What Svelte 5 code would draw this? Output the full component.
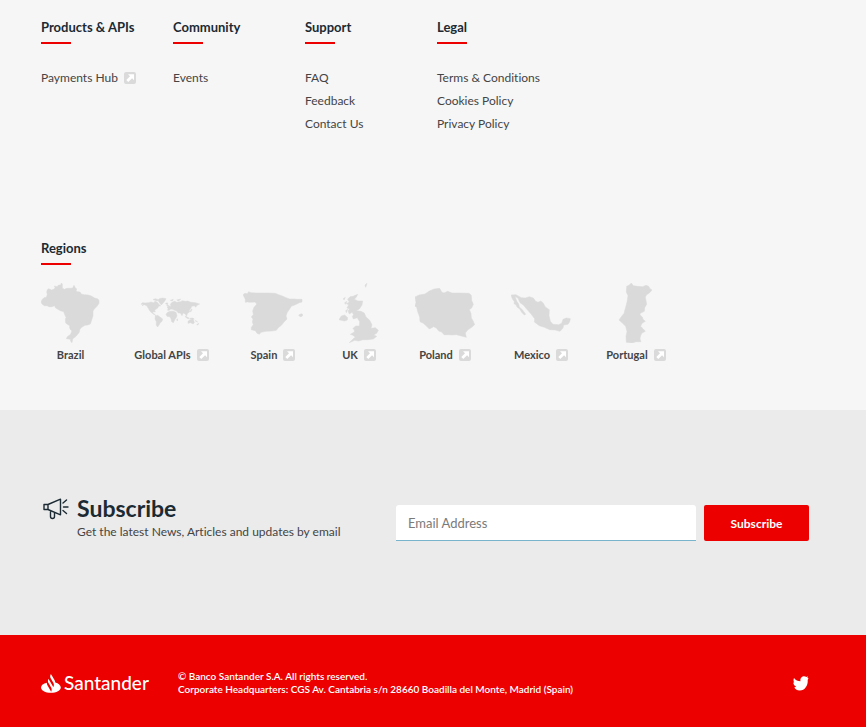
<script>
  const columns = [
    { title: 'Products & APIs', links: [{ text: 'Payments Hub', external: true }] },
    { title: 'Community', links: [{ text: 'Events' }] },
    { title: 'Support', links: [{ text: 'FAQ' }, { text: 'Feedback' }, { text: 'Contact Us' }] },
    { title: 'Legal', links: [{ text: 'Terms & Conditions' }, { text: 'Cookies Policy' }, { text: 'Privacy Policy' }] },
  ];

  const regions = [
    {
      name: 'Brazil', width: 59, box: '33 39 177 180', external: false,
      d: 'M52 59L56 56L65 60L73 57L75 52L73 48L81 50L86 45L92 45L94 39L97 42L97 54L103 58L111 55L122 55L128 54L132 46L136 53L140 57L138 63L143 65L150 66L154 72L163 74L175 75L184 78L194 84L204 87L207 92L207 100L201 109L193 117L189 123L189 137L184 154L181 162L173 165L165 166L155 172L150 178L147 188L138 199L128 207L126 218L122 214L121 208L109 206L112 200L122 193L124 187L126 182L122 180L119 174L119 167L112 163L107 159L106 148L108 142L105 136L101 125L91 122L82 117L76 113L74 107L66 110L57 110L51 107L43 107L36 102L33 96L36 89L42 83L49 82L52 73L50 67Z',
    },
    {
      name: 'Global APIs', width: 71, box: '318 39 213 180', external: true,
      d: 'M333 103L337 98L346 99L356 98L363 96L371 98L375 94L382 97L386 102L392 108L386 108L384 113L379 117L374 121L376 126L371 125L367 129L373 132L378 137L373 134L366 129L360 124L355 115L350 107L343 104L336 107L341 103ZM369 89L376 86L385 89L382 93L375 91ZM384 91L388 86L398 84L408 86L405 92L400 98L394 105L389 99ZM408 99L414 99L412 103L407 102ZM376 138L383 136L390 141L398 147L396 154L391 158L387 165L383 171L379 166L379 155L375 147ZM413 121L414 115L411 111L417 107L423 110L421 103L426 97L434 94L440 97L451 95L457 92L467 94L473 93L483 97L496 98L509 102L501 106L497 112L493 107L485 109L482 116L478 121L478 126L472 131L470 138L465 131L459 129L456 137L451 129L445 129L440 123L434 121L428 118L422 117L418 121ZM413 127L421 124L430 124L438 127L441 137L438 144L434 150L430 158L425 155L423 146L419 140L411 139L408 133ZM440 149L443 146L442 153ZM466 138L473 142L478 145L474 146L467 142ZM479 145L488 144L493 147L488 149ZM474 154L480 149L486 148L491 151L493 158L489 162L482 158L474 160ZM410 107L413 103L416 108ZM440 90L452 87L446 93ZM479 126L483 119L486 117L484 124ZM495 152L499 153L503 156ZM500 164L506 160L504 165ZM421 91L430 88L427 93Z',
    },
    {
      name: 'Spain', width: 60, box: '54 39 180 180', external: true,
      d: 'M54 74L60 70L67 71L71 65L78 68L93 69L111 69L132 69L151 70L161 74L172 78L183 83L194 87L207 87L220 88L231 88L231 96L223 98L211 104L199 109L194 117L187 127L183 138L186 147L177 156L170 165L160 173L154 181L141 183L123 184L108 187L103 193L96 190L91 182L79 179L79 172L85 164L82 156L84 147L79 141L85 133L83 123L87 112L95 103L91 96L75 97L67 96L61 97L61 88ZM221 135L229 131L234 134L231 139L225 140Z',
    },
    {
      name: 'UK', width: 40, box: '342 39 120 180', external: true,
      d: 'M375 80L384 79L398 73L394 81L388 88L399 93L413 93L411 105L403 117L394 122L408 124L418 129L423 141L434 151L441 164L438 175L451 173L460 181L455 190L446 195L455 199L445 207L429 209L414 209L401 213L389 211L373 218L383 208L391 201L382 195L376 193L388 186L388 179L383 176L392 168L403 168L404 155L399 147L397 143L385 147L382 139L386 134L381 127L373 132L369 123L374 117L366 114L371 104L364 101L373 96L368 88ZM342 149L349 138L359 135L368 143L367 150L358 153ZM420 45L426 40L422 52ZM354 87L361 82L358 89ZM359 98L366 94L361 103ZM362 122L368 118L364 128Z',
    },
    {
      name: 'Poland', width: 60, box: '45 39 180 180', external: true,
      d: 'M45 81L57 75L75 72L88 63L102 57L119 55L125 66L132 69L143 64L156 69L180 69L207 70L214 76L215 91L220 103L215 114L208 119L213 130L214 144L220 154L224 164L215 172L203 180L196 189L199 202L181 197L169 194L157 195L144 194L132 194L125 186L116 183L110 175L101 170L88 177L80 169L70 160L60 155L59 141L53 125L50 112L44 108L48 98Z',
    },
    {
      name: 'Mexico', width: 60, box: '333 39 180 180', external: true,
      d: 'M333 75L348 74L364 83L376 84L388 80L400 84L407 94L414 97L422 93L429 98L436 111L448 119L447 137L451 154L459 163L476 164L485 160L489 148L499 144L511 146L509 155L504 163L491 165L489 174L480 184L466 180L449 179L433 172L418 167L403 156L404 146L393 132L380 117L370 105L360 98L354 85L345 79L350 93L356 102L358 111L367 119L377 133L373 135L365 127L360 118L351 111L348 104L342 101L343 95L337 86Z',
    },
    {
      name: 'Portugal', width: 58, box: '141 39 174 180', external: true,
      d: 'M200 49L208 45L214 39L220 47L233 49L248 50L258 46L266 49L270 56L276 60L269 68L260 74L256 81L258 92L260 103L254 113L253 124L241 130L240 135L247 141L249 148L256 154L246 160L242 169L249 176L256 184L245 190L241 200L240 207L243 215L229 215L216 219L199 217L198 199L201 185L197 169L186 158L177 150L184 140L192 130L197 112L201 96L204 77L199 66Z',
    },
  ];
</script>

{#snippet externalIcon()}
  <svg class="external" viewBox="0 0 12 12" aria-hidden="true">
    <rect width="12" height="12" rx="2" fill="#dadada" />
    <path d="M4 2.200h6v6L8.100 6.300 4.300 10 2.300 8 6 4.200z" fill="#fff" />
  </svg>
{/snippet}

<footer>
  <section class="sitemap">
    <nav class="columns" aria-label="Footer">
      {#each columns as column}
        <div class="column">
          <h2>{column.title}</h2>
          <ul>
            {#each column.links as link}
              <li>
                <a href="/">{link.text}{#if link.external}{@render externalIcon()}{/if}</a>
              </li>
            {/each}
          </ul>
        </div>
      {/each}
    </nav>

    <h2>Regions</h2>
    <nav class="regions" aria-label="Regions">
      {#each regions as region}
        <a href="/" class="region" style:width="{region.width}px">
          <svg class="map" viewBox={region.box} aria-hidden="true"><path d={region.d} /></svg>
          <span class="label">{region.name}{#if region.external}{@render externalIcon()}{/if}</span>
        </a>
      {/each}
    </nav>
  </section>

  <section class="subscribe">
    <div class="pitch">
      <svg class="megaphone" viewBox="0 0 26 22" fill="none" stroke="#1b2a33" stroke-width="1.400" stroke-linejoin="round" stroke-linecap="round" aria-hidden="true">
        <path d="M1 6.500h4v5H1zM5 6.500L17.500 1.200v15.600L5 11.500M7.500 12.500v6a2 2 0 0 0 4 0v-4.200M20 5l3.500-3M20.500 9H25M20 12.500l3.500 3" />
      </svg>
      <div>
        <h3>Subscribe</h3>
        <p>Get the latest News, Articles and updates by email</p>
      </div>
    </div>
    <form onsubmit={(event) => event.preventDefault()}>
      <input type="email" placeholder="Email Address" aria-label="Email Address" />
      <button type="submit">Subscribe</button>
    </form>
  </section>

  <section class="legal">
    <a href="/" class="brand" aria-label="Santander">
      <svg viewBox="0 0 20 19" aria-hidden="true">
        <path fill="#fff" d="M14.300 8.500c-.1-.8-.3-1.500-.7-2.200L10.500.9C10.200.5 10 .3 9.900 0l-.1.200c-.8 1.300-.8 3 0 4.300l2.500 4.300c.8 1.300.8 3 0 4.300l-.1.200c0-.4-.2-.8-.4-1.100L9.500 8.200 8 5.700c-.2-.3-.3-.7-.4-1l-.1.200c-.8 1.300-.8 2.900 0 4.200l2.600 4.400c.8 1.300.8 2.900 0 4.200l-.1.200c0-.4-.2-.7-.4-1.100L6.400 11.200c-.4-.7-.6-1.600-.6-2.400C2.400 9.600 0 11.400 0 13.500 0 16.400 4.400 18.800 9.900 18.800s9.900-2.400 9.900-5.300c0-2.200-2.300-4.100-5.500-5z" />
      </svg>
      <span>Santander</span>
    </a>
    <p>
      © Banco Santander S.A. All rights reserved.<br />
      Corporate Headquarters: CGS Av. Cantabria s/n 28660 Boadilla del Monte, Madrid (Spain)
    </p>
    <a href="/" class="twitter" aria-label="Twitter">
      <svg viewBox="0 0 16 16" aria-hidden="true">
        <path fill="#fff" d="M1 3C2.700 5.100 4.800 6.200 7.500 6.300C7 3.500 8.500 1.200 11 1.200C12 1.200 12.700 1.500 13.300 2.100L15 1.300L14.400 3L15.500 3.200L14.700 5C15.200 10.500 11.800 15.500 6.800 15.500C3.800 15.500 1.900 14 1.400 12.200C2.200 12.200 2.800 12 3.200 11.600C1.500 11 .4 9.500 .3 7.500L1.200 7.600C.4 6 .3 4.500 1 3Z" />
      </svg>
    </a>
  </section>
</footer>

<style>
  :global(body) {
    margin: 0;
    background: #f6f6f6;
  }

  footer {
    font-family: Lato, 'Open Sans', sans-serif;
    font-size: 12px;
    font-variant-ligatures: none;
    color: #444;
  }

  h2, h3, p, ul {
    margin: 0;
    padding: 0;
  }

  a {
    color: inherit;
    text-decoration: none;
  }

  h2 {
    font-size: 13px;
    line-height: 20px;
    font-weight: 700;
    color: #1b2a33;
  }

  h2::after {
    content: '';
    display: block;
    width: 30px;
    height: 2px;
    margin-top: 5px;
    background: #ec0000;
  }

  .sitemap {
    padding: 17px 41px 45px;
    background: #f6f6f6;
  }

  .columns {
    display: flex;
    min-height: 221px;
  }

  .column {
    width: 132px;
    white-space: nowrap;
  }

  ul {
    list-style: none;
    margin-top: 22px;
  }

  li {
    line-height: 23px;
  }

  li a {
    display: inline-flex;
    align-items: center;
  }

  .external {
    width: 12px;
    height: 12px;
    margin-left: 6px;
    flex: none;
  }

  .regions {
    display: flex;
    flex-wrap: wrap;
    gap: 36px;
    margin-top: 18px;
  }

  .region {
    display: flex;
    flex-direction: column;
    align-items: center;
  }

  .map {
    width: 100%;
    height: 60px;
    fill: #dadada;
    stroke: #dadada;
    stroke-width: 1.5;
  }

  .label {
    display: flex;
    align-items: center;
    margin-top: 2px;
    font-size: 11px;
    line-height: 20px;
    font-weight: 700;
    white-space: nowrap;
  }

  .subscribe {
    display: flex;
    justify-content: space-between;
    align-items: flex-start;
    padding: 82px 57px 94px 43px;
    background: #ebebeb;
  }

  .pitch {
    display: flex;
    gap: 8px;
    white-space: nowrap;
  }

  .megaphone {
    width: 26px;
    height: 22px;
    margin-top: 6px;
  }

  h3 {
    font-size: 23px;
    line-height: 32px;
    font-weight: 700;
    color: #1b2a33;
  }

  .pitch p {
    line-height: 16px;
  }

  form {
    display: flex;
    gap: 8px;
    margin-top: 13px;
  }

  input {
    box-sizing: border-box;
    width: 300px;
    height: 36px;
    padding: 0 12px;
    border: 0;
    border-bottom: 1px solid #78b4cc;
    border-radius: 3px 3px 0 0;
    background: #fff;
    font: 13px Lato, sans-serif;
  }

  input::placeholder {
    color: #7a7a7a;
  }

  button {
    width: 105px;
    height: 36px;
    padding: 0;
    border: 0;
    border-radius: 2px;
    background: #ec0000;
    color: #fff;
    font: 700 12px Lato, sans-serif;
  }

  .legal {
    display: flex;
    align-items: center;
    padding: 35px 57px 31px 41px;
    background: #ec0000;
    color: #fff;
  }

  .brand {
    display: flex;
    align-items: center;
    gap: 3px;
    width: 137px;
    font-size: 19px;
    line-height: 24px;
    font-weight: 500;
  }

  .brand svg {
    width: 20px;
    height: 19px;
  }

  .legal p {
    flex: 1;
    font-size: 10px;
    line-height: 13px;
    font-weight: 600;
  }

  .twitter svg {
    display: block;
    width: 16px;
    height: 16px;
  }
</style>
